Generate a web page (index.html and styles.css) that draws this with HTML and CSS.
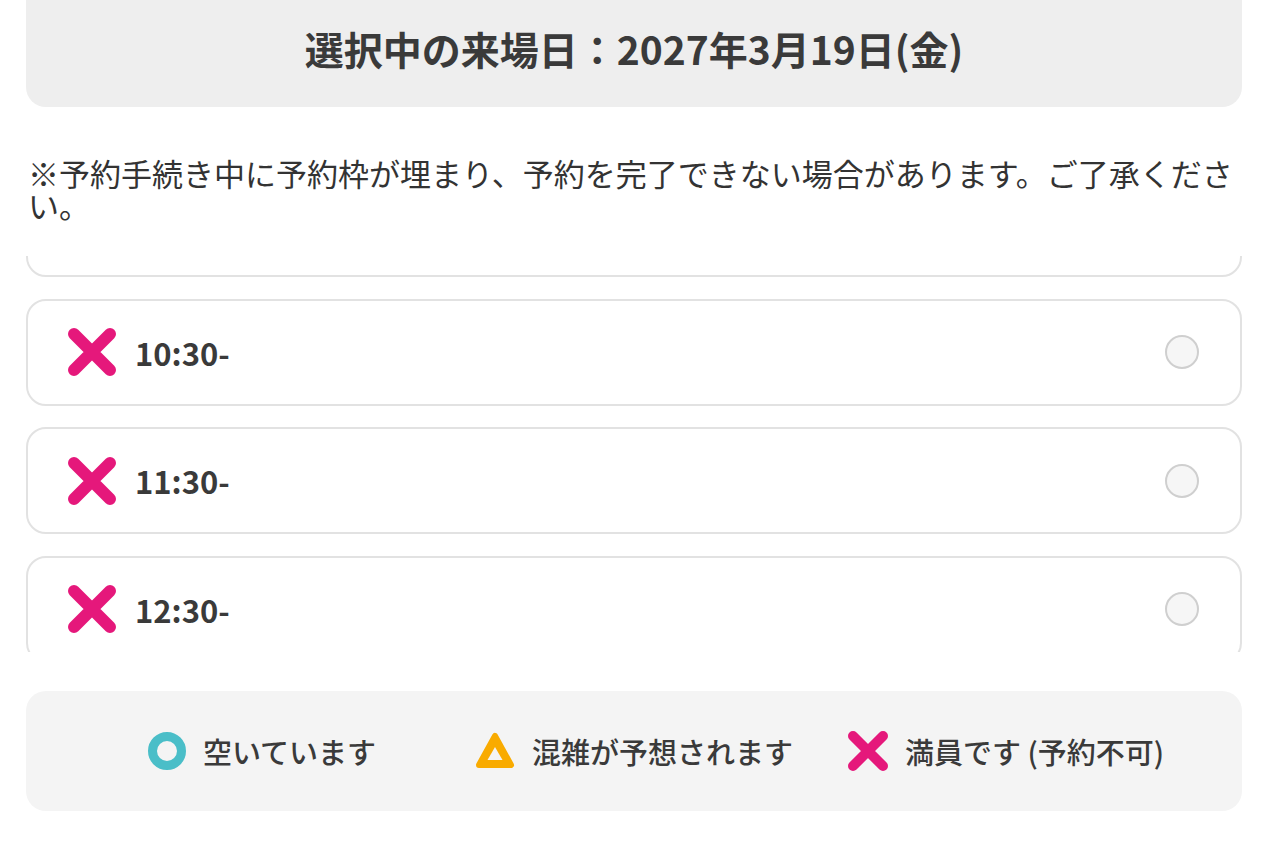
FILE: index.html
```html
<!DOCTYPE html>
<html lang="ja">
<head>
<meta charset="utf-8">
<title>来場日</title>
<link rel="stylesheet" href="styles.css">
</head>
<body>
<div class="page">
  <div class="date-box">
    <h1 class="date-title">選択中の来場日：2027年3月19日(金)</h1>
  </div>
  <p class="notice">※予約手続き中に予約枠が埋まり、予約を完了できない場合があります。ご了承ください。</p>
  <div class="slot-viewport">
    <ul class="slot-list">
      <li class="slot">
        <svg class="icon-x" viewBox="0 0 48 48"><path d="M6 6 L42 42 M42 6 L6 42"/></svg>
        <span class="slot-time">9:30-</span>
        <span class="radio"></span>
      </li>
      <li class="slot">
        <svg class="icon-x" viewBox="0 0 48 48"><path d="M6 6 L42 42 M42 6 L6 42"/></svg>
        <span class="slot-time">10:30-</span>
        <span class="radio"></span>
      </li>
      <li class="slot">
        <svg class="icon-x" viewBox="0 0 48 48"><path d="M6 6 L42 42 M42 6 L6 42"/></svg>
        <span class="slot-time">11:30-</span>
        <span class="radio"></span>
      </li>
      <li class="slot">
        <svg class="icon-x" viewBox="0 0 48 48"><path d="M6 6 L42 42 M42 6 L6 42"/></svg>
        <span class="slot-time">12:30-</span>
        <span class="radio"></span>
      </li>
    </ul>
  </div>
  <div class="legend">
    <div class="legend-item">
      <span class="icon-ring"></span>
      <span class="legend-text">空いています</span>
    </div>
    <div class="legend-item">
      <svg class="icon-tri" viewBox="0 0 40 40"><path class="tri-outer" d="M20 5 L36 34 L4 34 Z"/><path class="tri-inner" d="M20 16 L27.5 29 L12.5 29 Z"/></svg>
      <span class="legend-text">混雑が予想されます</span>
    </div>
    <div class="legend-item">
      <svg class="icon-x icon-x-small" viewBox="0 0 48 48"><path d="M6 6 L42 42 M42 6 L6 42"/></svg>
      <span class="legend-text">満員です (予約不可)</span>
    </div>
  </div>
</div>
</body>
</html>
```

FILE: styles.css
```css
* { box-sizing: border-box; }
html, body {
  margin: 0;
  padding: 0;
  background: #ffffff;
}
body {
  font-family: "Noto Sans CJK JP", "Noto Sans", sans-serif;
  color: #333333;
}
.page {
  width: 1216px;
  margin-left: 26px;
}
.date-box {
  background: #eeeeee;
  border-radius: 0 0 20px 20px;
  height: 107px;
  padding-top: 20px;
}
.date-title {
  margin: 0;
  font-size: 39px;
  line-height: 56px;
  font-weight: 700;
  text-align: center;
  color: #3a3a3a;
}
.notice {
  margin: 50px 0 0 2px;
  font-size: 31px;
  line-height: 32px;
  font-weight: 400;
  color: #333333;
}
.slot-viewport {
  margin-top: 35px;
  height: 396px;
  overflow: hidden;
}
.slot-list {
  list-style: none;
  margin: -86px 0 0 0;
  padding: 0;
  display: flex;
  flex-direction: column;
  gap: 21.5px;
}
.slot {
  height: 107px;
  border: 2px solid #e2e2e2;
  border-radius: 20px;
  background: #ffffff;
  display: flex;
  align-items: center;
  padding: 0 41px 0 40px;
}
.icon-x {
  width: 48px;
  height: 48px;
  flex: none;
}
.icon-x path {
  stroke: #e5187b;
  stroke-width: 12;
  stroke-linecap: round;
  fill: none;
}
.slot-time {
  margin-left: 19px;
  font-size: 31px;
  font-weight: 700;
  color: #3a3a3a;
  flex: 1;
}
.radio {
  width: 34px;
  height: 34px;
  border-radius: 50%;
  border: 2px solid #cfcfcf;
  background: #f6f6f6;
  flex: none;
}
.legend {
  margin-top: 39px;
  height: 120px;
  background: #f4f4f4;
  border-radius: 20px;
  display: grid;
  grid-template-columns: repeat(3, 1fr);
  align-items: center;
  padding: 0 50px;
}
.legend-item {
  display: flex;
  align-items: center;
  justify-content: center;
}
.icon-ring {
  width: 38px;
  height: 38px;
  border-radius: 50%;
  border: 9px solid #4abec8;
  flex: none;
}
.icon-tri {
  width: 40px;
  height: 40px;
  flex: none;
}
.tri-outer {
  fill: #f9ab00;
  stroke: #f9ab00;
  stroke-width: 6;
  stroke-linejoin: round;
}
.tri-inner {
  fill: #f4f4f4;
}
.icon-x-small {
  width: 40px;
  height: 40px;
}
.legend-text {
  margin-left: 17px;
  font-size: 29px;
  font-weight: 500;
  color: #3a3a3a;
}
```
